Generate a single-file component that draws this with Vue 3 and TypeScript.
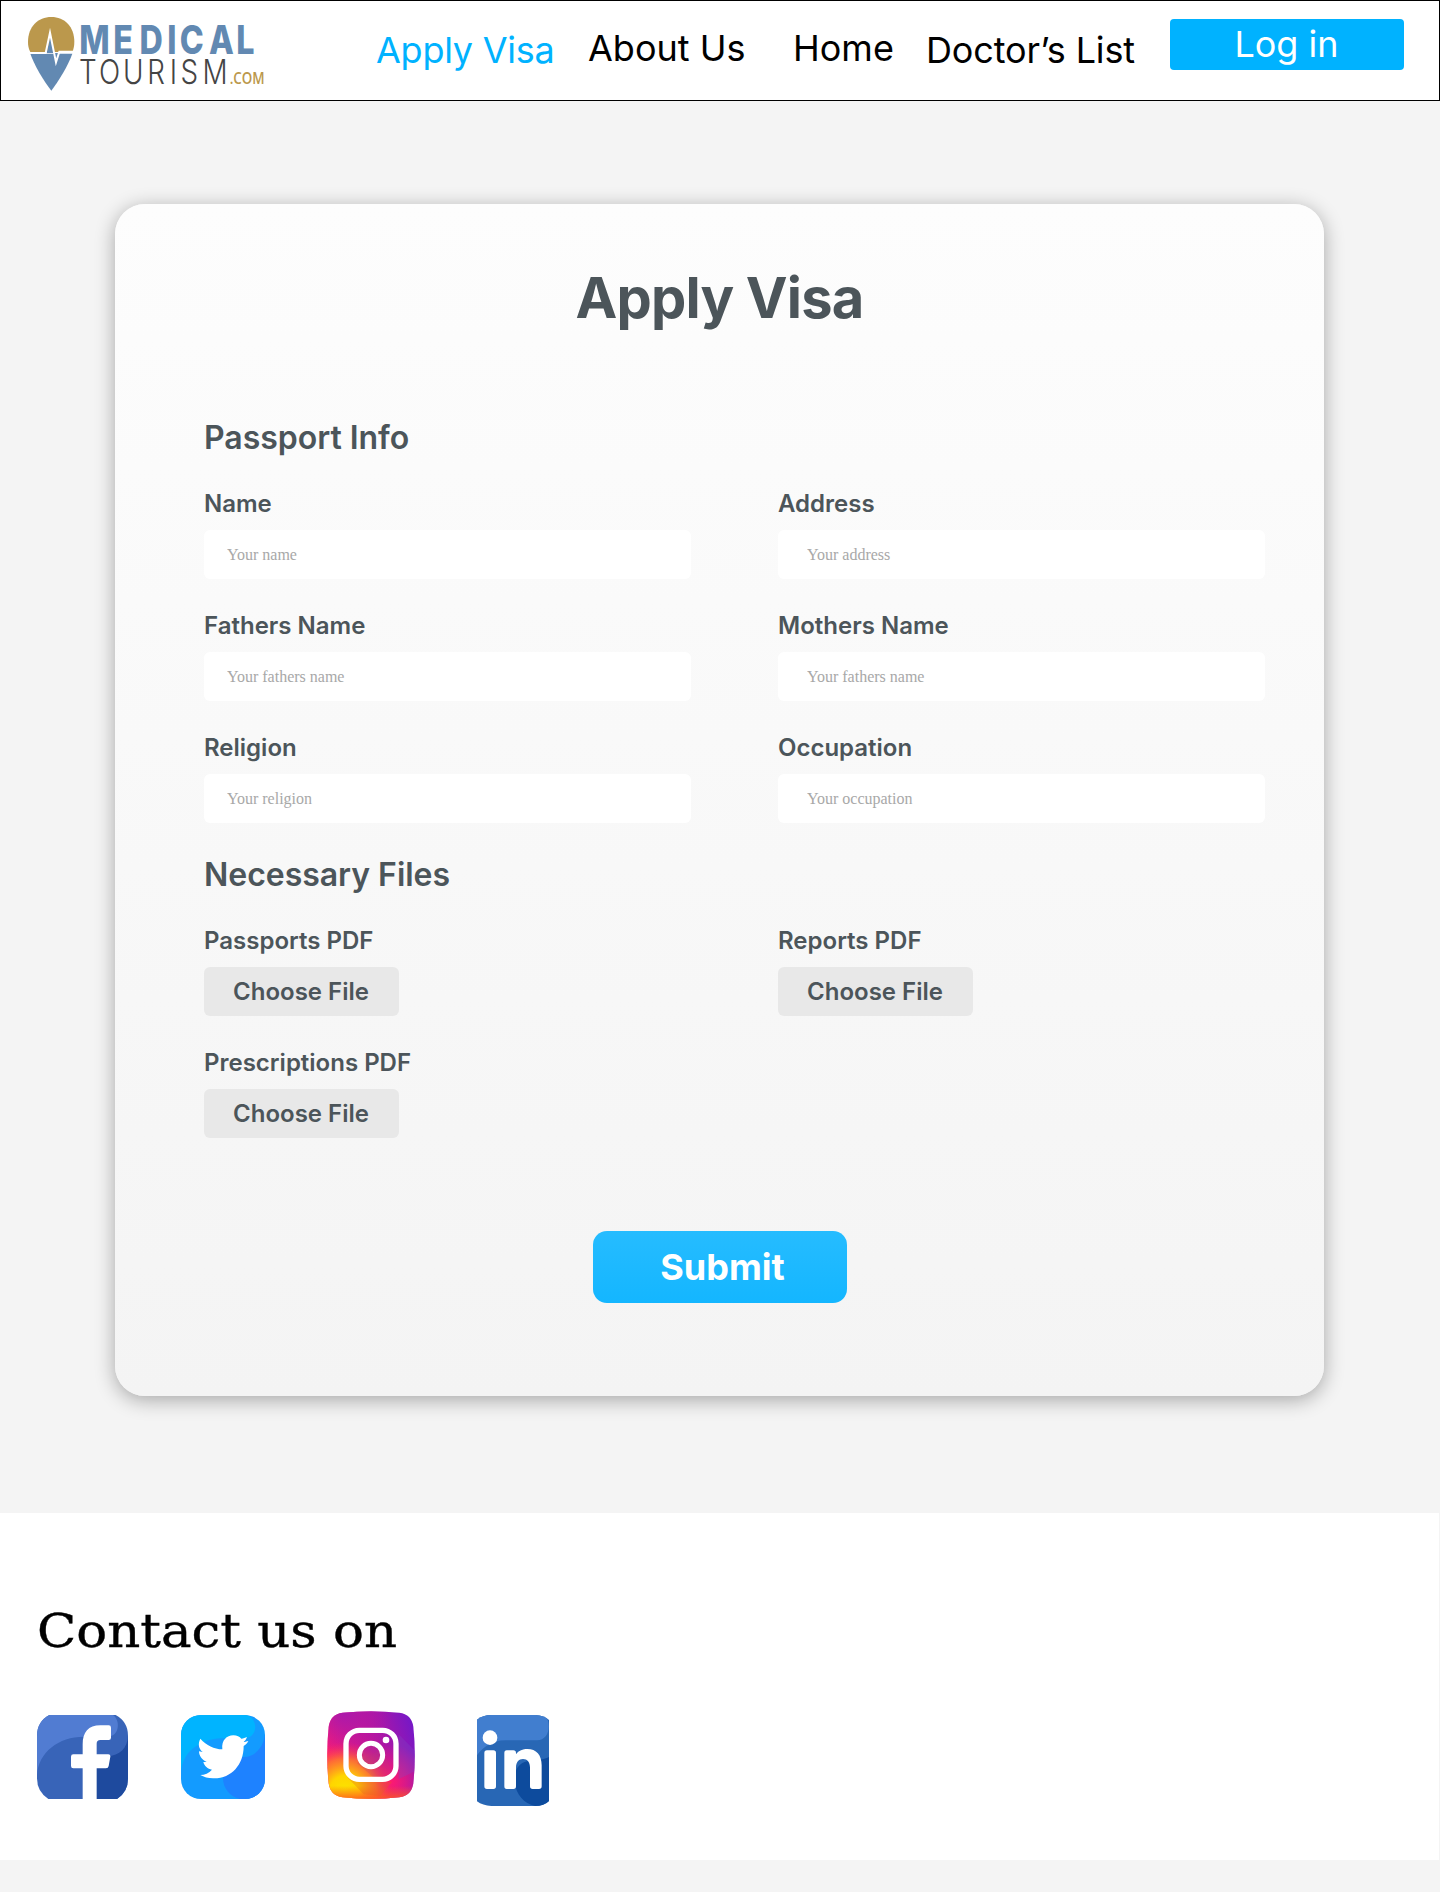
<script setup lang="ts">
interface Field {
  label: string
  placeholder: string
}

const fields: Field[] = [
  { label: 'Name', placeholder: 'Your name' },
  { label: 'Address', placeholder: 'Your address' },
  { label: 'Fathers Name', placeholder: 'Your fathers name' },
  { label: 'Mothers Name', placeholder: 'Your fathers name' },
  { label: 'Religion', placeholder: 'Your religion' },
  { label: 'Occupation', placeholder: 'Your occupation' },
]

const files: string[] = ['Passports PDF', 'Reports PDF', 'Prescriptions PDF']
</script>

<template>
  <div class="page">
    <header class="header">
      <svg class="logo" viewBox="3 3 840 297" role="img" aria-label="Medical Tourism">
        <path d="M84 126C84 80 114 51 154 51S223 80 223 126C223 137 221 147 217 156H91C86 147 84 137 84 126Z" fill="#bb984c" />
        <path d="M91 161H217C205 195 176 243 154 272C131 243 103 195 91 161Z" fill="#6289b2" />
        <path d="M140 159L151 112L167 188L175 159Z" fill="#6289b2" />
        <path d="M88 159H137L150 98L168 187L178 155H220" fill="none" stroke="#fff" stroke-width="6" stroke-miterlimit="8" />
        <text class="logo-main" transform="scale(.82 1)" y="162" x="290 414 510 612 658 765 864">MEDICAL</text>
        <text class="logo-sub" transform="scale(.82 1)" y="251" x="289 362 450 539 621 660 741">TOURISM</text>
        <text class="logo-com" x="689" y="252" textLength="105" lengthAdjust="spacingAndGlyphs">.COM</text>
      </svg>
      <nav class="nav">
        <a class="link active low">Apply Visa</a>
        <a class="link">About Us</a>
        <a class="link">Home</a>
        <a class="link low">Doctor’s List</a>
        <button class="login">Log in</button>
      </nav>
    </header>

    <main class="main">
      <form class="card" @submit.prevent>
        <h1>Apply Visa</h1>
        <h2>Passport Info</h2>
        <div class="grid">
          <label v-for="f in fields" :key="f.label" class="field">
            <span class="label">{{ f.label }}</span>
            <input type="text" :placeholder="f.placeholder" />
          </label>
        </div>
        <h2>Necessary Files</h2>
        <div class="grid">
          <div v-for="name in files" :key="name" class="field">
            <span class="label">{{ name }}</span>
            <button type="button" class="choose">Choose File</button>
          </div>
        </div>
        <button class="submit">Submit</button>
      </form>
    </main>

    <footer class="footer">
      <svg class="contact" viewBox="0 0 400 60">
        <text x="0" y="47" textLength="360" lengthAdjust="spacingAndGlyphs">Contact us on</text>
      </svg>
      <div class="socials">
        <svg class="facebook" viewBox="0 0 273 252" aria-label="Facebook">
          <defs><clipPath id="fb"><path d="M37 0H236Q273 20 273 62V190Q273 232 240 252H34Q0 230 0 190V62Q0 20 37 0Z" /></clipPath></defs>
          <g clip-path="url(#fb)">
            <rect width="273" height="252" fill="#3864b8" />
            <path d="M0 0H228C250 16 247 56 222 63C200 69 184 65 140 65C65 65 4 112 0 180Z" fill="#517cd2" />
            <path d="M273 62C272 98 248 123 211 123L175 132V252H273Z" fill="#1e4a9e" />
            <path d="M137 252V160H109Q102 160 102 153V125Q102 118 109 118H137V88C137 52 154 31 190 31H215Q222 31 222 38V68Q222 75 215 75H190Q179 75 179 86V118H214Q221 118 220 125L215 153Q214 160 207 160H179V252Z" fill="#fff" />
          </g>
        </svg>
        <svg class="twitter" viewBox="0 0 252 252" aria-label="Twitter">
          <defs><clipPath id="tw"><rect width="252" height="252" rx="60" /></clipPath></defs>
          <g clip-path="url(#tw)">
            <rect width="252" height="252" fill="#139bff" />
            <path d="M0 0H198C235 15 229 70 190 70H120C54 73 4 113 0 172Z" fill="#00b4ff" />
            <path d="M252 57C249 95 221 127 189 126C150 128 126 155 126 190C126 222 149 245 176 252H252Z" fill="#1e82ff" />
            <path d="M58 71C77 92 99 102 124 103C121 76 137 61 157 61C168 61 176 66 181 71C187 71 193 68 198 66C196 73 192 78 188 81C193 81 198 79 202 78C198 86 194 89 188 93C188 150 150 192 96 190C82 190 68 186 58 180C71 179 84 175 93 164C80 162 70 153 67 141H77C63 134 54 123 54 109L65 111C53 101 50 87 58 71Z" fill="#fff" />
          </g>
        </svg>
        <svg class="instagram" viewBox="0 0 264 264" aria-label="Instagram">
          <defs>
            <linearGradient id="igBase" x1="0" y1=".45" x2="1" y2=".1">
              <stop offset="0" stop-color="#ff1b72" /><stop offset=".48" stop-color="#bd169b" /><stop offset="1" stop-color="#7018ca" />
            </linearGradient>
            <radialGradient id="igTop" cx=".2" cy="0" r=".55">
              <stop offset="0" stop-color="#a919ac" /><stop offset="1" stop-color="#b318a5" stop-opacity="0" />
            </radialGradient>
            <radialGradient id="igPink" cx=".72" cy=".8" r=".42">
              <stop offset="0" stop-color="#ff1a70" /><stop offset="1" stop-color="#ff1a70" stop-opacity="0" />
            </radialGradient>
            <radialGradient id="igWarm" cx=".2" cy=".9" r=".55">
              <stop offset="0" stop-color="#fbe300" /><stop offset=".3" stop-color="#ffd500" /><stop offset=".65" stop-color="#ff7a2a" stop-opacity=".85" /><stop offset="1" stop-color="#ff245e" stop-opacity="0" />
            </radialGradient>
            <linearGradient id="igEdge" x1="0" y1="0" x2="0" y2="1">
              <stop offset=".85" stop-color="#ff5a1e" stop-opacity="0" /><stop offset="1" stop-color="#ff5a1e" stop-opacity=".85" />
            </linearGradient>
            <clipPath id="ig"><path d="M47 5Q132-4 217 5Q254 10 259 47Q268 132 259 217Q254 254 217 259Q132 268 47 259Q10 254 5 217Q-4 132 5 47Q10 10 47 5Z" /></clipPath>
          </defs>
          <g clip-path="url(#ig)">
            <rect width="264" height="264" fill="url(#igBase)" />
            <rect width="264" height="264" fill="url(#igTop)" />
            <rect width="264" height="264" fill="url(#igPink)" />
            <rect width="264" height="264" fill="url(#igWarm)" />
            <rect width="264" height="264" fill="url(#igEdge)" />
            <path d="M206 61L264 119V180L215 205V70Z" fill="#7d48c5" opacity=".3" />
            <path d="M60 198L110 250L160 255L195 212H90Z" fill="#e0651f" opacity=".3" />
            <path d="M90 156L145 204H200L170 110Z" fill="#b83b73" opacity=".25" />
            <rect x="57" y="58" width="150" height="147" rx="40" fill="none" stroke="#fff" stroke-width="16" />
            <circle cx="132" cy="132" r="35" fill="#b32c91" fill-opacity=".45" stroke="#fff" stroke-width="15" />
            <circle cx="177" cy="87" r="10" fill="#fff" />
          </g>
        </svg>
        <svg class="linkedin" viewBox="0 0 216 273" aria-label="LinkedIn">
          <defs><clipPath id="li"><path d="M0 14Q18 0 42 0H175Q202 2 216 15V258Q201 273 174 273H43Q17 272 0 259Z" /></clipPath></defs>
          <g clip-path="url(#li)">
            <rect width="216" height="273" fill="#2867b5" />
            <path d="M0 0H206C225 35 214 76 180 76H85C45 77 20 94 0 121Z" fill="#417ecf" />
            <path d="M216 126C200 135 172 136 151 139C125 145 110 165 113 201C117 239 141 266 174 273H216Z" fill="#0d4b9d" />
            <circle cx="39" cy="68" r="22" fill="#fff" />
            <path d="M30 106H49Q57 106 57 114V214Q57 222 49 222H30Q22 222 22 214V114Q22 106 30 106ZM89 106H109Q117 106 117 114V118C125 106 138 102 151 102C178 102 194 120 194 151V214Q194 222 186 222H167Q159 222 159 214V158C159 141 151 132 138 132C125 132 117 142 117 158V214Q117 222 109 222H89Q82 222 82 214V114Q82 106 89 106Z" fill="#fff" />
          </g>
        </svg>
      </div>
    </footer>
  </div>
</template>

<style>
body {
  margin: 0;
  background: #f4f4f4;
}
</style>

<style scoped>
* {
  box-sizing: border-box;
}

.page {
  width: 1440px;
  height: 1892px;
  background: #f4f4f4;
  font-family: Inter, 'Liberation Sans', sans-serif;
}

button {
  border: 0;
  padding: 0;
  font-family: inherit;
}

.header {
  display: flex;
  align-items: flex-start;
  height: 101px;
  border: 1px solid #000;
  background: #fff;
}

.logo {
  display: block;
  flex: none;
  width: 280px;
  height: 99px;
}

.logo-main {
  font: 800 118px Inter, sans-serif;
  fill: #6289b2;
}

.logo-sub {
  font: 300 102px Inter, sans-serif;
  fill: #444;
}

.logo-com {
  font: 600 47px 'Open Sans', sans-serif;
  fill: #bb984c;
}

.nav {
  display: grid;
  grid-template-columns: 212px 205px 133px 244px 234px;
  align-items: start;
  margin-left: 95px;
}

.link,
.login {
  font-size: 36px;
  font-weight: 400;
  line-height: 44px;
  white-space: nowrap;
}

.link {
  margin-top: 25px;
  color: #000;
}

.link.low {
  margin-top: 27px;
  letter-spacing: -0.15px;
}

.link.active {
  color: #00b2ff;
  letter-spacing: -0.25px;
}

.login {
  height: 51px;
  margin-top: 18px;
  padding: 0 1px 1px 0;
  border-radius: 4px;
  background: #00b2ff;
  color: #fff;
}

.main {
  height: 1412px;
  padding: 103px 0 0 115px;
}

.card {
  width: 1209px;
  height: 1192px;
  padding: 60px 59px 0 89px;
  border-radius: 30px;
  background: linear-gradient(#fdfdfd, #f4f4f4);
  box-shadow: 0 4px 20px rgba(0, 0, 0, 0.32);
  color: #4c555a;
}

h1 {
  margin: 0 30px 86px 0;
  font-size: 56px;
  font-weight: 700;
  line-height: 68px;
  letter-spacing: -0.8px;
  text-align: center;
}

h2 {
  margin: 0 0 31px;
  font-size: 32px;
  font-weight: 600;
  line-height: 40px;
  letter-spacing: -0.03px;
}

.grid {
  display: grid;
  grid-template-columns: 487px 487px;
  gap: 31px 87px;
}

.grid + h2 {
  margin-top: 32px;
}

.field {
  display: flex;
  flex-direction: column;
  align-items: flex-start;
  gap: 11px;
}

.label,
.choose {
  font-size: 24px;
  font-weight: 600;
  line-height: 30px;
}

.field + .field + .field {
  padding-top: 1px;
}

input {
  width: 487px;
  height: 49px;
  padding: 1px 23px 0;
  border: 0;
  border-radius: 6px;
  background: #fff;
  font: 16px 'Liberation Serif', serif;
}

.field:nth-child(even) input {
  padding-left: 29px;
}

input::placeholder {
  color: #a8a8a8;
  opacity: 1;
}

.choose {
  width: 195px;
  height: 49px;
  padding-right: 1px;
  border-radius: 6px;
  background: #e8e8e8;
  color: #4c555a;
}

.submit {
  display: block;
  width: 254px;
  height: 72px;
  margin: 93px 0 0 389px;
  padding-left: 5px;
  border-radius: 14px;
  background: linear-gradient(#26bcff, #14b6ff);
  color: #fff;
  font-size: 36px;
  font-weight: 700;
  line-height: 72px;
}

.footer {
  width: 1439px;
  height: 347px;
  padding: 87px 0 0 37px;
  background: #fff;
}

.contact {
  display: block;
  width: 400px;
  height: 60px;
}

.contact text {
  font: 47px 'DejaVu Serif', serif;
  stroke: #000;
  stroke-width: 0.4px;
}

.socials {
  display: flex;
  align-items: flex-start;
  margin-top: 51px;
}

.socials svg {
  display: block;
  flex: none;
}

.facebook {
  width: 91px;
  height: 84px;
  margin-top: 4px;
}

.twitter {
  width: 84px;
  height: 84px;
  margin: 4px 0 0 53px;
}

.instagram {
  width: 88px;
  height: 88px;
  margin-left: 62px;
}

.linkedin {
  width: 72px;
  height: 91px;
  margin: 4px 0 0 62px;
}
</style>
